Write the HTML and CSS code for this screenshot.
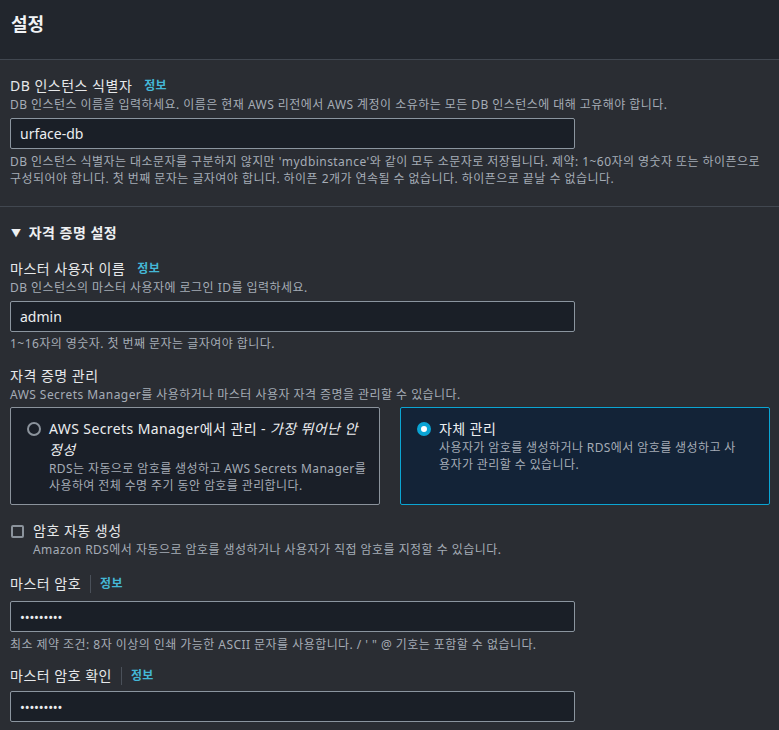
FILE: index.html
```html
<!DOCTYPE html>
<html lang="ko">
<head>
    <meta charset="UTF-8">
    <meta name="viewport" content="width=device-width, initial-scale=1.0">
    <title>설정</title>
    <link rel="stylesheet" href="styles.css">
</head>
<body>
    <div class="header">
        <h2>설정</h2>
    </div>

    <div class="section section-id">
        <div class="field">
            <div class="label">DB 인스턴스 식별자 <a class="info">정보</a></div>
            <div class="desc">DB 인스턴스 이름을 입력하세요. 이름은 현재 AWS 리전에서 AWS 계정이 소유하는 모든 DB 인스턴스에 대해 고유해야 합니다.</div>
            <input type="text" class="text-input" value="urface-db">
            <div class="hint wide">DB 인스턴스 식별자는 대소문자를 구분하지 않지만 'mydbinstance'와 같이 모두 소문자로 저장됩니다. 제약: 1~60자의 영숫자 또는 하이픈으로 구성되어야 합니다. 첫 번째 문자는 글자여야 합니다. 하이픈 2개가 연속될 수 없습니다. 하이픈으로 끝날 수 없습니다.</div>
        </div>
    </div>

    <div class="section section-cred">
        <div class="expand-title"><span class="caret">&#9660;</span> 자격 증명 설정</div>

        <div class="field user">
            <div class="label">마스터 사용자 이름 <a class="info">정보</a></div>
            <div class="desc">DB 인스턴스의 마스터 사용자에 로그인 ID를 입력하세요.</div>
            <input type="text" class="text-input" value="admin">
            <div class="hint">1~16자의 영숫자. 첫 번째 문자는 글자여야 합니다.</div>
        </div>

        <div class="field manage">
            <div class="label">자격 증명 관리</div>
            <div class="desc">AWS Secrets Manager를 사용하거나 마스터 사용자 자격 증명을 관리할 수 있습니다.</div>
            <div class="tiles">
                <div class="tile">
                    <span class="radio"></span>
                    <div class="tile-body">
                        <div class="tile-title">AWS Secrets Manager에서 관리 - <em>가장 뛰어난 안<br>정성</em></div>
                        <div class="tile-desc">RDS는 자동으로 암호를 생성하고 AWS Secrets Manager를<br>사용하여 전체 수명 주기 동안 암호를 관리합니다.</div>
                    </div>
                </div>
                <div class="tile selected">
                    <span class="radio checked"></span>
                    <div class="tile-body">
                        <div class="tile-title">자체 관리</div>
                        <div class="tile-desc">사용자가 암호를 생성하거나 RDS에서 암호를 생성하고 사<br>용자가 관리할 수 있습니다.</div>
                    </div>
                </div>
            </div>
        </div>

        <div class="check-row">
            <span class="checkbox"></span>
            <div>
                <div class="label">암호 자동 생성</div>
                <div class="desc">Amazon RDS에서 자동으로 암호를 생성하거나 사용자가 직접 암호를 지정할 수 있습니다.</div>
            </div>
        </div>

        <div class="field pw">
            <div class="label">마스터 암호<span class="sep"></span><a class="info near">정보</a></div>
            <input type="password" class="text-input password" value="123456789">
            <div class="hint">최소 제약 조건: 8자 이상의 인쇄 가능한 ASCII 문자를 사용합니다. / ' " @ 기호는 포함할 수 없습니다.</div>
        </div>

        <div class="field pw2">
            <div class="label">마스터 암호 확인<span class="sep"></span><a class="info near">정보</a></div>
            <input type="password" class="text-input password" value="123456789">
        </div>
    </div>
</body>
</html>
```

FILE: styles.css
```css
body {
    margin: 0;
    font-family: 'Noto Sans', 'Noto Sans CJK KR', sans-serif;
    background-color: #2a2d33;
    color: #e6e8ea;
    font-size: 14px;
}
.header {
    background-color: #22262d;
    border-bottom: 1px solid #414750;
    height: 59px;
    padding: 0 11px;
}
.header h2 {
    margin: 0;
    padding-top: 12px;
    font-size: 18px;
    line-height: 24px;
    font-weight: bold;
    color: #f1f3f5;
}
.section {
    padding: 16px 10px 0 10px;
}
.section-id {
    padding-bottom: 19px;
    border-bottom: 1px solid #414750;
}
.label {
    line-height: 20px;
    letter-spacing: 0.5px;
    color: #e6e8ea;
    display: flex;
    align-items: center;
}
.info {
    color: #44b7d6;
    font-size: 12px;
    font-weight: bold;
    letter-spacing: 0.3px;
    margin-left: 12px;
}
.info.near {
    margin-left: 0;
}
.sep {
    display: inline-block;
    width: 1px;
    height: 18px;
    background-color: #4a5059;
    margin: 0 9px;
}
.desc, .hint {
    font-size: 12px;
    line-height: 17px;
    letter-spacing: 0.45px;
    color: #a5acb6;
}
.hint {
    margin-top: 4px;
}
.text-input {
    display: block;
    box-sizing: border-box;
    width: 565px;
    height: 31px;
    margin-top: 5px;
    padding: 0 9px;
    background-color: #1a1f27;
    border: 1px solid #8b959f;
    border-radius: 2px;
    color: #eceef0;
    font-family: inherit;
    font-size: 14px;
    outline: none;
}
.text-input.password {
    font-size: 13px;
    letter-spacing: -0.2px;
}
.expand-title {
    font-weight: bold;
    line-height: 20px;
    letter-spacing: 0.5px;
    color: #eef0f2;
    padding-left: 1px;
}
.caret {
    font-size: 10px;
    margin-right: 3px;
    vertical-align: 1px;
}
.field.user {
    margin-top: 16px;
}
.field.user .hint {
    margin-top: 3px;
}
.field.manage {
    margin-top: 14px;
}
.tiles {
    display: grid;
    grid-template-columns: 370px 370px;
    gap: 20px;
    margin-top: 4px;
}
.tile {
    display: flex;
    gap: 8px;
    box-sizing: border-box;
    height: 98px;
    padding: 10px 18px 0 16px;
    background-color: #1a1f28;
    border: 1px solid #8b939c;
    border-radius: 2px;
}
.tile.selected {
    background-color: #132337;
    border-color: #0ba5d3;
}
.radio {
    flex: none;
    box-sizing: border-box;
    width: 14px;
    height: 14px;
    margin-top: 4px;
    border: 2px solid #8b939c;
    border-radius: 50%;
}
.radio.checked {
    border: 4px solid #0aa4d4;
    background-color: #ffffff;
}
.tile-title {
    line-height: 21px;
    letter-spacing: 0.4px;
    color: #eceef0;
    white-space: nowrap;
}
.tile-title em {
    font-style: italic;
}
.tile-desc {
    font-size: 12px;
    line-height: 17px;
    letter-spacing: 0.4px;
    color: #a5acb6;
    white-space: nowrap;
}
.check-row {
    display: flex;
    gap: 9px;
    margin-top: 16px;
    padding-left: 1px;
}
.checkbox {
    flex: none;
    box-sizing: border-box;
    width: 13px;
    height: 13px;
    margin-top: 4px;
    border: 2px solid #8b939c;
    border-radius: 2px;
}
.field.pw {
    margin-top: 16px;
}
.field.pw .text-input {
    margin-top: 7px;
}
.field.pw2 {
    margin-top: 13px;
}
```
